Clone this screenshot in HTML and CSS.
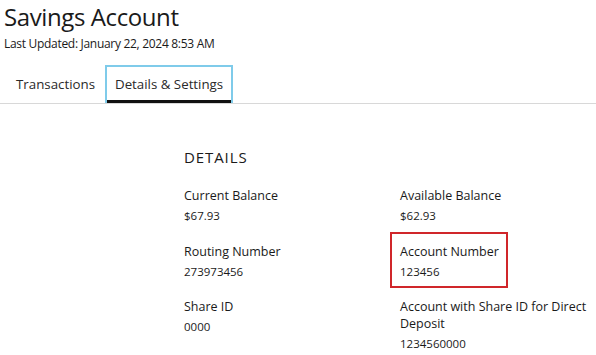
FILE: index.html
```html
<!DOCTYPE html>
<html>
<head>
    <meta charset="UTF-8">
    <title>Savings Account</title>
    <link rel="stylesheet" href="styles.css">
</head>
<body>
    <div class="page">
        <h1 class="page__title">Savings Account</h1>
        <div class="page__updated">Last Updated: January 22, 2024 8:53 AM</div>
        <div class="tabs">
            <div class="tabs__item">Transactions</div>
            <div class="tabs__item tabs__item--active">Details &amp; Settings</div>
        </div>
        <div class="details">
            <h2 class="details__title">DETAILS</h2>
            <div class="details__grid">
                <div class="field">
                    <div class="field__label">Current Balance</div>
                    <div class="field__value">$67.93</div>
                </div>
                <div class="field">
                    <div class="field__label">Available Balance</div>
                    <div class="field__value">$62.93</div>
                </div>
                <div class="field">
                    <div class="field__label">Routing Number</div>
                    <div class="field__value">273973456</div>
                </div>
                <div class="field field--marked">
                    <div class="field__label">Account Number</div>
                    <div class="field__value">123456</div>
                </div>
                <div class="field">
                    <div class="field__label">Share ID</div>
                    <div class="field__value">0000</div>
                </div>
                <div class="field">
                    <div class="field__label">Account with Share ID for Direct Deposit</div>
                    <div class="field__value">1234560000</div>
                </div>
            </div>
        </div>
    </div>
</body>
</html>
```

FILE: styles.css
```css
*, *::before, *::after {
    box-sizing: border-box;
}
body {
    margin: 0;
    background: #fff;
    color: #1a1a1a;
    font-family: 'Open Sans', sans-serif;
}
.page {
    padding: 0 0 0 4px;
}
.page__title {
    margin: 0;
    font-size: 24px;
    font-weight: 400;
    letter-spacing: -0.4px;
    line-height: 33px;
}
.page__updated {
    margin-top: 3px;
    font-size: 12px;
    letter-spacing: -0.3px;
    line-height: 16px;
}
.tabs {
    display: flex;
    margin-top: 13px;
    margin-left: -4px;
    border-bottom: 1px solid #d8d8d8;
}
.tabs__item {
    padding: 0 10px 0 16px;
    height: 38px;
    line-height: 38px;
    font-size: 13.3px;
    color: #2a2a2a;
}
.tabs__item--active {
    padding: 0 8px;
    line-height: 35px;
    border: 2px solid #7fcbea;
    border-bottom: none;
    box-shadow: inset 0 -3px 0 #111;
}
.details {
    margin: 42px 0 0 180px;
}
.details__title {
    margin: 0;
    font-size: 15px;
    font-weight: 400;
    letter-spacing: 0.9px;
    line-height: 22px;
}
.details__grid {
    display: grid;
    grid-template-columns: 216px 200px;
    row-gap: 18.5px;
    margin-top: 19px;
}
.field {
    font-size: 12.5px;
}
.field--marked {
    margin: -11px 0 -8px -10px;
    padding: 9px 0 6px 8px;
    width: 118px;
    border: 2px solid #d0262a;
}
.field__label {
    line-height: 17px;
}
.field__value {
    margin-top: 3px;
    font-size: 11.5px;
    line-height: 17px;
}
```
